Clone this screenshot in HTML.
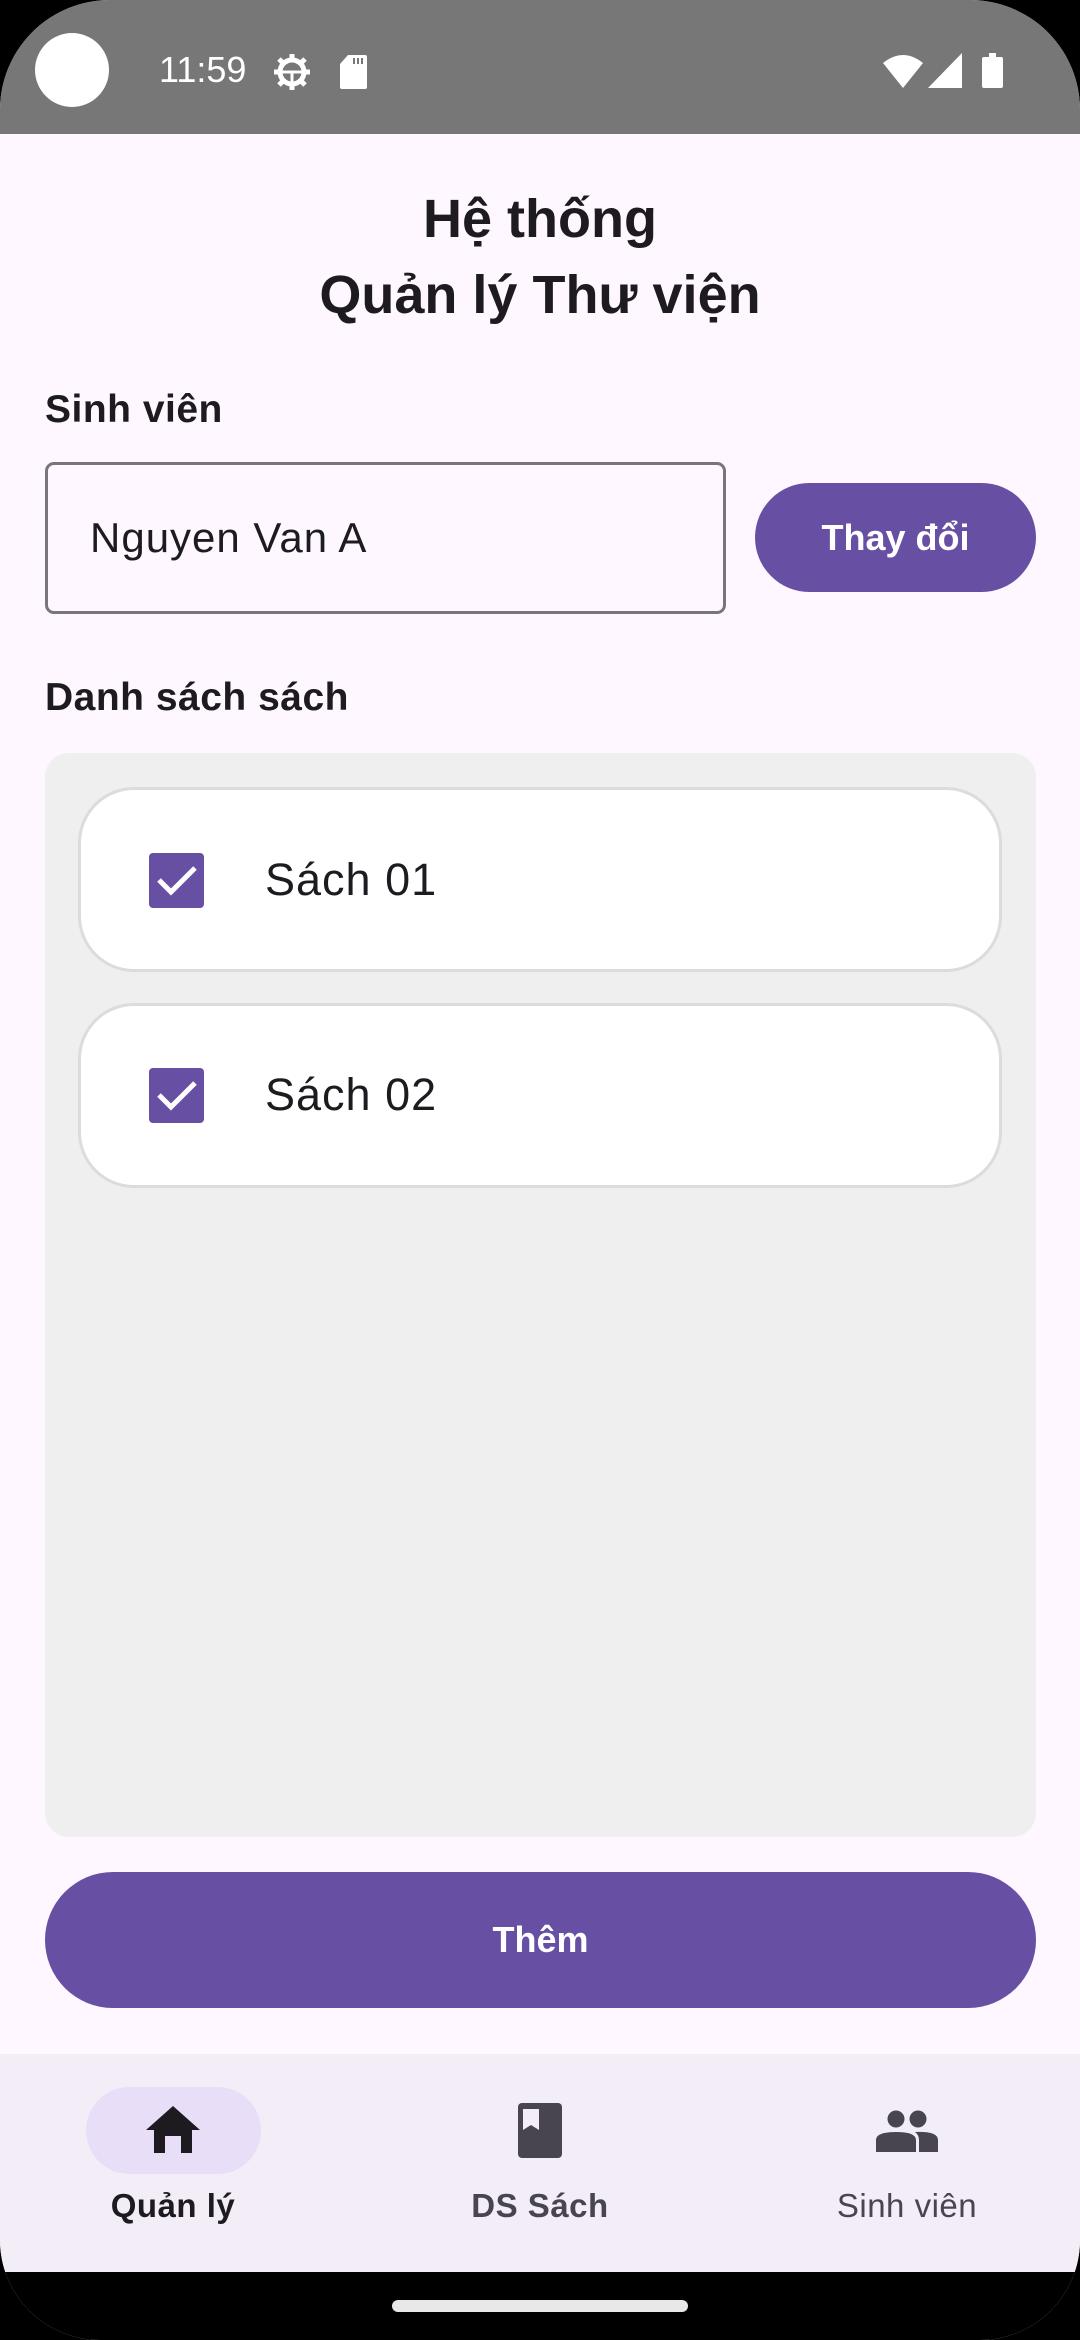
<!DOCTYPE html>
<html><head><meta charset="utf-8"><style>
*{margin:0;padding:0;box-sizing:border-box}
body{width:1080px;height:2340px;background:#000;position:relative;overflow:hidden;font-family:"Liberation Sans",sans-serif;color:#1d1b20}
.screen{position:absolute;left:0;top:0;width:1080px;height:2340px;background:#fef7ff;border-radius:110px 110px 100px 100px;overflow:hidden}
.abs{position:absolute}
.status{left:0;top:0;width:1080px;height:134px;background:#777777}
.t{position:absolute;white-space:nowrap}
</style></head><body>
<div class="screen">
<div class="abs status"></div>
<div class="abs" style="left:35px;top:33px;width:74px;height:74px;border-radius:50%;background:#fff"></div>
<div class="t" style="left:159px;top:48px;font-size:36px;line-height:44px;color:#fff">11:59</div>
<svg class="abs" style="left:272px;top:52px" width="40" height="40" viewBox="0 0 40 40"><g fill="none" stroke="#fff" stroke-width="5"><circle cx="20" cy="20" r="12"/></g><g stroke="#fff" stroke-width="5"><line x1="20" y1="2" x2="20" y2="8"/><line x1="20" y1="32" x2="20" y2="38"/><line x1="2" y1="20" x2="8" y2="20"/><line x1="32" y1="20" x2="38" y2="20"/><line x1="7" y1="7" x2="11" y2="11"/><line x1="29" y1="29" x2="33" y2="33"/><line x1="33" y1="7" x2="29" y2="11"/><line x1="7" y1="33" x2="11" y2="29"/></g><line x1="9" y1="20" x2="31" y2="20" stroke="#fff" stroke-width="3"/><line x1="20" y1="20" x2="20" y2="31" stroke="#fff" stroke-width="3"/></svg>
<svg class="abs" style="left:340px;top:55px" width="27" height="34" viewBox="0 0 27 34"><path d="M8 0H25a2 2 0 0 1 2 2V32a2 2 0 0 1-2 2H2a2 2 0 0 1-2-2V9Z" fill="#fff"/><rect x="13" y="3" width="2" height="6" fill="#777"/><rect x="17" y="3" width="2" height="6" fill="#777"/><rect x="21" y="3" width="2" height="6" fill="#777"/></svg>
<svg class="abs" style="left:883px;top:53px" width="40" height="35" viewBox="0 0 40 35"><path d="M0 10Q20-6 40 10L20 35Z" fill="#fff"/></svg>
<svg class="abs" style="left:928px;top:53px" width="34" height="35" viewBox="0 0 34 35"><path d="M34 0V35H0Z" fill="#fff"/></svg>
<svg class="abs" style="left:982px;top:53px" width="21" height="35" viewBox="0 0 21 35"><rect x="7" y="0" width="7" height="4" fill="#fff"/><rect x="0" y="4" width="21" height="31" rx="2" fill="#fff"/></svg>

<div class="t" style="left:0;width:1080px;text-align:center;top:181px;font-size:54px;line-height:76px;font-weight:bold">Hệ thống</div>
<div class="t" style="left:0;width:1080px;text-align:center;top:257px;font-size:54px;line-height:76px;font-weight:bold">Quản lý Thư viện</div>

<div class="t" style="left:45px;top:385px;font-size:39px;line-height:50px;font-weight:bold;letter-spacing:0.5px">Sinh viên</div>
<div class="abs" style="left:45px;top:462px;width:681px;height:152px;border:3px solid #79747e;border-radius:9px"></div>
<div class="t" style="left:90px;top:512px;font-size:42px;line-height:52px;letter-spacing:1px">Nguyen Van A</div>
<div class="abs" style="left:755px;top:483px;width:281px;height:109px;border-radius:55px;background:#6750a4;color:#fff;font-size:36px;font-weight:bold;text-align:center;line-height:109px">Thay đổi</div>

<div class="t" style="left:45px;top:673px;font-size:39px;line-height:50px;font-weight:bold;letter-spacing:0.5px">Danh sách sách</div>
<div class="abs" style="left:45px;top:753px;width:991px;height:1084px;background:#efefef;border-radius:24px"></div>

<div class="abs" style="left:78px;top:787px;width:924px;height:185px;background:#fff;border:3px solid #dcdcdc;border-radius:56px"></div>
<div class="abs" style="left:149px;top:853px;width:55px;height:55px;background:#6750a4;border-radius:4px"><svg width="55" height="55" viewBox="0 0 55 55"><path d="M10 27L22 39L46 15" fill="none" stroke="#fff" stroke-width="5"/></svg></div>
<div class="t" style="left:265px;top:853px;font-size:45px;line-height:54px;letter-spacing:1px">Sách 01</div>

<div class="abs" style="left:78px;top:1003px;width:924px;height:185px;background:#fff;border:3px solid #dcdcdc;border-radius:56px"></div>
<div class="abs" style="left:149px;top:1068px;width:55px;height:55px;background:#6750a4;border-radius:4px"><svg width="55" height="55" viewBox="0 0 55 55"><path d="M10 27L22 39L46 15" fill="none" stroke="#fff" stroke-width="5"/></svg></div>
<div class="t" style="left:265px;top:1068px;font-size:45px;line-height:54px;letter-spacing:1px">Sách 02</div>

<div class="abs" style="left:45px;top:1872px;width:991px;height:136px;border-radius:68px;background:#6750a4;color:#fff;font-size:36px;font-weight:bold;text-align:center;line-height:136px">Thêm</div>

<div class="abs" style="left:0;top:2054px;width:1080px;height:218px;background:#f3edf7"></div>
<div class="abs" style="left:86px;top:2087px;width:175px;height:87px;border-radius:44px;background:#e8def8"></div>
<svg class="abs" style="left:146px;top:2106px" width="54" height="48" viewBox="0 0 54 48"><path d="M27 0L54 24H46V47H35V30H19V47H8V24H0Z" fill="#1d1b20"/></svg>
<svg class="abs" style="left:518px;top:2103px" width="44" height="55" viewBox="0 0 44 55"><rect width="44" height="55" rx="4" fill="#49454f"/><path d="M5 6H21V27L13 22L5 27Z" fill="#f3edf7"/></svg>
<svg class="abs" style="left:876px;top:2110px" width="62" height="42" viewBox="0 0 62 42"><circle cx="20" cy="9" r="8.5" fill="#49454f"/><circle cx="42" cy="9" r="8.5" fill="#49454f"/><path d="M0 42V30Q0 22 20 22Q40 22 40 30V42Z" fill="#49454f"/><path d="M43 42V30Q43 25 39 22Q62 21 62 30V42Z" fill="#49454f"/></svg>
<div class="t" style="left:73px;width:200px;text-align:center;top:2186px;font-size:33px;line-height:40px;font-weight:bold;letter-spacing:0.5px">Quản lý</div>
<div class="t" style="left:440px;width:200px;text-align:center;top:2186px;font-size:33px;line-height:40px;color:#49454f;font-weight:bold;letter-spacing:0.5px">DS Sách</div>
<div class="t" style="left:807px;width:200px;text-align:center;top:2186px;font-size:33px;line-height:40px;color:#49454f;letter-spacing:0.5px">Sinh viên</div>

<div class="abs" style="left:0;top:2272px;width:1080px;height:68px;background:#000"></div>
<div class="abs" style="left:392px;top:2300px;width:296px;height:12px;border-radius:6px;background:#e8e8e8"></div>
</div>
</body></html>
